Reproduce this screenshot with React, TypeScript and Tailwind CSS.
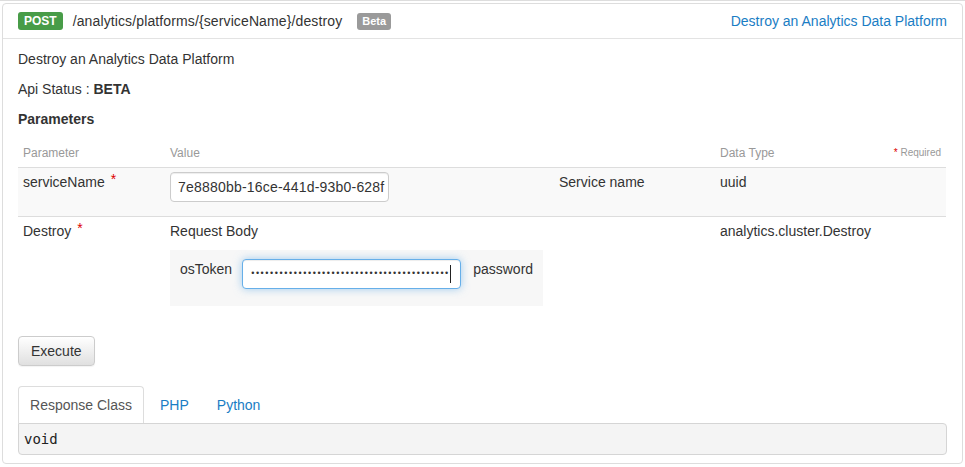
import React from "react";

const dots = "•".repeat(42);

export default function App() {
  return (
    <div className="bg-white w-[965px] h-[467px] overflow-hidden text-[14px] leading-[20px] text-[#333] font-['Liberation_Sans',Arial,sans-serif]">
      <div className="h-px bg-[#dddddd]" />
      <div className="mt-[2px] ml-[2px] w-[961px] border border-[#dddddd] rounded-[4px]">
        {/* header */}
        <div className="flex items-center h-[35px] px-[15px] border-b border-[#e3e3e3]">
          <span className="h-[18px] px-[6px] bg-[#489c48] rounded-[3px] text-white font-bold text-[12px] leading-[18px]">
            POST
          </span>
          <span className="ml-[10px] tracking-[0.12px]">/analytics/platforms/{"{serviceName}"}/destroy</span>
          <span className="ml-[15px] h-[17px] px-[5px] bg-[#9a9a9a] rounded-[3px] text-white font-bold text-[11px] leading-[17px]">
            Beta
          </span>
          <span className="ml-auto text-[#1a7dc4]">Destroy an Analytics Data Platform</span>
        </div>

        {/* body */}
        <div className="px-[15px] pt-[10px] pb-[8px]">
          <p>Destroy an Analytics Data Platform</p>
          <p className="mt-[10px]">
            Api Status : <b>BETA</b>
          </p>
          <p className="mt-[10px] font-bold">Parameters</p>

          <div className="mt-[10px] grid grid-cols-[147px_389px_161px_231px]">
            {/* header row */}
            <div className="h-[29px] border-b border-[#dddddd] pl-[5px] flex items-center text-[12px] text-[#999]">Parameter</div>
            <div className="h-[29px] border-b border-[#dddddd] pl-[5px] flex items-center text-[12px] text-[#999]">Value</div>
            <div className="h-[29px] border-b border-[#dddddd]" />
            <div className="h-[29px] border-b border-[#dddddd] pl-[5px] pr-[5px] flex items-center text-[12px] text-[#999]">
              <span>Data Type</span>
              <span className="ml-auto text-[10px]">
                <span className="text-[#d00]">*</span> Required
              </span>
            </div>

            {/* row 1 */}
            <div className="h-[49px] border-b border-[#dddddd] bg-[#f9f9f9] pl-[5px] pt-[4px]">
              serviceName<span className="ml-[6px] text-[#d00] align-[3px] leading-[8px]">*</span>
            </div>
            <div className="h-[49px] border-b border-[#dddddd] bg-[#f9f9f9] pl-[5px] pt-[4px]">
              <div className="w-[219px] h-[30px] border border-[#cccccc] rounded-[4px] bg-white pl-[7px] flex items-center overflow-hidden whitespace-nowrap tracking-[0.2px] shadow-[inset_0_1px_1px_rgba(0,0,0,0.075)]">
                7e8880bb-16ce-441d-93b0-628f
              </div>
            </div>
            <div className="h-[49px] border-b border-[#dddddd] bg-[#f9f9f9] pl-[5px] pt-[4px]">Service name</div>
            <div className="h-[49px] border-b border-[#dddddd] bg-[#f9f9f9] pl-[5px] pt-[4px]">uuid</div>

            {/* row 2 */}
            <div className="h-[94px] pl-[5px] pt-[4px]">
              Destroy<span className="ml-[6px] text-[#d00] align-[3px] leading-[8px]">*</span>
            </div>
            <div className="col-span-2 h-[94px] pl-[5px] pt-[4px]">
              <div>Request Body</div>
              <div className="mt-[9px] inline-flex items-start h-[56px] bg-[#f7f7f7] pl-[10px] pr-[10px] pt-[9px]">
                <span>osToken</span>
                <div className="ml-[10px] w-[219px] h-[30px] border border-[#66afe9] rounded-[4px] bg-white pl-[8px] flex items-center shadow-[inset_0_1px_1px_rgba(0,0,0,0.075),0_0_8px_rgba(102,175,233,0.6)]">
                  <span className="text-[9px] tracking-[1.58px] leading-[10px] text-[#333] -mt-[2px]">{dots}</span>
                  <span className="w-px h-[18px] bg-[#222]" />
                </div>
                <span className="ml-[12px]">password</span>
              </div>
            </div>
            <div className="h-[94px] pl-[5px] pt-[4px]">analytics.cluster.Destroy</div>
          </div>

          <button className="mt-[25px] h-[30px] px-[12px] border border-[#cccccc] rounded-[4px] bg-linear-to-b from-white to-[#e0e0e0] text-[#333] shadow-[0_1px_1px_rgba(0,0,0,0.05)]">
            Execute
          </button>

          {/* tabs */}
          <div className="mt-[20px] flex">
            <div className="w-[126px] h-[37px] border border-b-0 border-[#dddddd] rounded-t-[4px] bg-white text-[#555] flex items-center justify-center">
              Response Class
            </div>
            <div className="ml-[2px] px-[14px] h-[37px] flex items-center text-[#1a7dc4]">PHP</div>
            <div className="px-[14px] h-[37px] flex items-center text-[#1a7dc4]">Python</div>
          </div>
          <div className="h-[32px] border border-[#d5d5d5] bg-[#f4f4f4] rounded-b-[4px] rounded-tr-[4px] pl-[5px] flex items-center font-['DejaVu_Sans_Mono',monospace] text-[14px] text-[#222]">
            void
          </div>
        </div>
      </div>
    </div>
  );
}
